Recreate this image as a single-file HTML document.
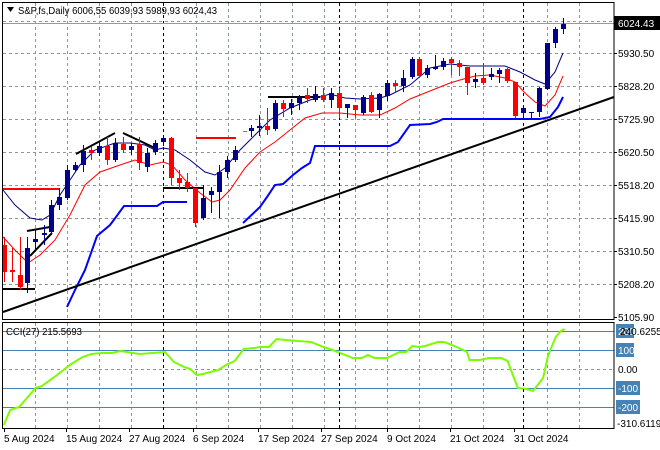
<!DOCTYPE html><html><head><meta charset="utf-8"><style>
body{margin:0;background:#fff;width:660px;height:450px;overflow:hidden}
svg{display:block;font-family:"Liberation Sans",sans-serif;font-size:10px}
</style></head><body>
<svg id="s" width="660" height="450" xmlns="http://www.w3.org/2000/svg">
<rect width="660" height="450" fill="#fff"/>
<g id="grid" stroke="#8a95a0" stroke-dasharray="3,3" stroke-width="1"></g>
<g id="cci"></g>
<g id="main"></g>
<rect x="2.5" y="2.5" width="611.5" height="317" fill="none" stroke="#000"/>
<rect x="2.5" y="322.5" width="611.5" height="106" fill="none" stroke="#000"/>
<path d="M7 7 L14 7 L10.5 12 Z" fill="#000"/>
<text x="18" y="14" font-size="10" textLength="199" lengthAdjust="spacingAndGlyphs">S&amp;P,fs,Daily  6006,55 6039,93 5989,93 6024,43</text>
<text x="6" y="335" font-size="10" textLength="76" lengthAdjust="spacingAndGlyphs">CCI(27) 215.5693</text>
<g id="labels" font-size="10"></g>
</svg>
<script>
const NS="http://www.w3.org/2000/svg";
function el(p,t,a,txt){const e=document.createElementNS(NS,t);for(const k in a)e.setAttribute(k,a[k]);if(txt!=null)e.textContent=txt;document.getElementById(p).appendChild(e);return e;}
[21,53,86,119,152,185,218,251,284].forEach(y=>el('grid','line',{x1:3,x2:614,y1:y+.5,y2:y+.5}));
[369].forEach(y=>el('grid','line',{x1:3,x2:614,y1:y+.5,y2:y+.5}));
[35,67,99,131,196,228,260,292,324,355,387,419,451,483,547,579].forEach(x=>{el('grid','line',{x1:x+.5,x2:x+.5,y1:3,y2:319});el('grid','line',{x1:x+.5,x2:x+.5,y1:323,y2:428});});
[163,339,523].forEach(x=>{el('main','line',{x1:x+.5,x2:x+.5,y1:3,y2:319,stroke:'#000','stroke-dasharray':'3,3'});el('main','line',{x1:x+.5,x2:x+.5,y1:323,y2:428,stroke:'#000','stroke-dasharray':'3,3'});});
[331,350,388,407].forEach(y=>el('cci','line',{x1:3,x2:614,y1:y+.5,y2:y+.5,stroke:'#4682b4'}));
const cp="3,425 8,410 15,407 22,397 28,388 33,386 45,375 55,365 65,357 72,354 80,353 88,353 95,351 100,352 110,354 120,353 130,352 137,362 145,367 150,369 155,375 160,374 172,370 178,365 185,361 192,349 200,348 205,347 212,347 218,339 225,340 235,341 245,342 255,347 262,350 268,353 278,358 285,358 290,355 295,358 305,358 315,352 320,352 325,346 330,347 335,346 345,342 350,342 360,347 368,352 370,360 378,360 385,358 395,358 400,361 408,388 415,389 420,391 428,378 432,355 438,337 442,331 445,329".split(' ').map(p=>{const [x,y]=p.split(',').map(Number);return (x*1.269).toFixed(1)+','+y;}).join(' ');
el('cci','polyline',{fill:'none',stroke:'#7cfc00','stroke-width':2,points:cp});
el('main','line',{x1:3,x2:614,y1:23.5,y2:23.5,stroke:'#999'});
el('main','polyline',{fill:'none',stroke:'#000080','stroke-width':1,points:"3,190 15,205 30,218 42,220 50,215 60,195 70,180 80,165 95,150 115,143 130,143 145,145 155,150 163,148 175,150 190,160 205,172 215,175 225,168 240,150 255,135 270,120 290,108 310,100 330,94 345,98 360,99 380,98 390,95 410,85 430,68 450,64 470,66 490,66 505,66 520,72 535,80 545,84 555,72 563,53"});
el('main','polyline',{fill:'none',stroke:'#f00','stroke-width':1,points:"3,237 15,250 28,263 40,255 55,240 70,215 85,185 100,172 120,165 135,160 150,165 163,162 172,165 185,180 200,193 212,202 220,200 230,190 245,168 260,152 275,142 290,130 305,118 322,113 340,113 360,115 380,115 395,108 410,99 430,91 450,83 460,80 475,76 490,75 505,78 515,82 525,93 535,102 545,106 555,95 563,76"});
el('main','polyline',{fill:'none',stroke:'#0000ff','stroke-width':2,points:"67,307 75,290 85,270 97,236 110,225 116,217 124,206 145,206 157,206 163,202 187,202"});
el('main','polyline',{fill:'none',stroke:'#0000ff','stroke-width':2,points:"243,223 260,207 267,197 275,185 283,184 293,175 302,168 310,163 315,146 330,146 390,146 398,142 410,125 430,124 437,122 443,119 540,119 550,117 558,107 563,97"});
[[3,312,614,97,2],[3,289,35,289,2],[27,231,50,227,2],[30,256,52,233,2],[76,154,115,133,2],[123,133,157,149,2],[163,188,203,188,2],[268,97,320,97,2]].forEach(l=>el('main','line',{x1:l[0],y1:l[1],x2:l[2],y2:l[3],stroke:'#000','stroke-width':l[4]}));
[[3,189,60,189],[196,138,236,138]].forEach(l=>el('main','line',{x1:l[0],y1:l[1],x2:l[2],y2:l[3],stroke:'#f00','stroke-width':2}));
el('main','line',{x1:243,y1:131.5,x2:247,y2:131.5,stroke:'#0c0'});
const C=[[4,245,272,237,282,'r'],[12,270,272,248,282,'r'],[20,275,287,237,290,'r'],[27,248,283,237,293,'b'],[35,239,242,229,250,'b'],[44,233,235,225,245,'b'],[51,205,232,200,235,'b'],[59,197,205,188,210,'b'],[67,170,198,165,200,'b'],[75,165,170,162,172,'b'],[83,151,165,145,172,'b'],[91,150,153,147,160,'r'],[99,146,153,141,156,'b'],[107,146,160,137,165,'r'],[115,143,160,138,162,'b'],[123,144,150,137,153,'r'],[131,146,150,143,155,'b'],[139,144,163,137,170,'r'],[147,153,167,148,172,'b'],[155,143,152,140,155,'b'],[163,138,142,137,146,'b'],[171,138,178,137,185,'r'],[179,178,183,170,190,'r'],[187,182,188,173,192,'r'],[195,188,223,188,227,'r'],[203,198,218,185,220,'b'],[211,191,195,187,213,'b'],[219,172,192,165,218,'b'],[227,160,172,156,178,'b'],[235,150,160,146,162,'b'],[251,128,131,125,137,'b'],[259,126,128,115,136,'b'],[267,126,130,108,135,'r'],[275,103,129,100,131,'b'],[283,103,109,100,117,'r'],[291,103,108,99,115,'b'],[299,97,103,95,110,'b'],[307,95,99,88,103,'r'],[315,94,100,86,102,'b'],[323,95,100,88,102,'r'],
[331,93,100,88,108,'b'],[339,93,108,88,118,'r'],[347,104,108,104,118,'b'],[355,105,110,105,118,'r'],[363,97,113,95,115,'b'],[371,95,112,92,113,'r'],[379,94,110,93,118,'b'],[387,83,96,80,101,'b'],[395,83,86,80,92,'r'],[403,78,86,70,92,'b'],[412,59,77,57,79,'b'],[419,59,76,57,78,'r'],[427,68,75,65,78,'b'],[435,67,69,55,70,'b'],[443,61,67,58,70,'b'],[451,59,63,57,75,'r'],[459,63,67,60,76,'r'],[467,67,83,67,95,'r'],[475,79,82,73,88,'b'],[483,78,83,63,85,'r'],[491,74,77,68,80,'b'],[499,70,74,68,83,'b'],[507,69,81,68,83,'r'],[515,82,116,82,118,'r'],[523,108,113,108,118,'b'],[531,112,113,112,118,'b'],[539,88,112,87,117,'b'],[547,43,89,43,90,'b'],[555,29,43,27,48,'b'],[563,24,29,18,34,'b']];
C.forEach(c=>{const col=c[5]=='b'?'#00008b':'#f00';el('main','line',{x1:c[0]+.5,x2:c[0]+.5,y1:c[3],y2:c[4],stroke:col});el('main','rect',{x:c[0]-2,y:c[1],width:5,height:Math.max(1,c[2]-c[1]),fill:col});});
el('labels','rect',{x:614,y:16,width:46,height:14,fill:'#000'});
el('labels','text',{x:618,y:27,fill:'#fff'},'6024.43');
[['5930.50',53],['5828.20',86],['5725.90',119],['5620.50',152],['5518.20',185],['5415.90',218],['5310.50',251],['5208.20',284],['5105.90',317]].forEach(l=>{el('labels','line',{x1:614,x2:617,y1:l[1]+.5,y2:l[1]+.5,stroke:'#000'});el('labels','text',{x:618,y:l[1]+4},l[0]);});
[['200',331],['100',350],['-100',388],['-200',407]].forEach(l=>{el('labels','rect',{x:616,y:l[1]-7,width:l[0].length>3?24:18,height:14,fill:'#4682b4'});el('labels','text',{x:618,y:l[1]+4,fill:'#fff'},l[0]);});
el('labels','text',{x:618,y:373},'0.00');
el('labels','text',{x:620,y:335},'240.6255');
el('labels','text',{x:617,y:427},'-310.6119');
[['5 Aug 2024',4],['15 Aug 2024',66],['27 Aug 2024',129],['6 Sep 2024',193],['17 Sep 2024',258],['27 Sep 2024',321],['9 Oct 2024',387],['21 Oct 2024',450],['31 Oct 2024',514]].forEach(l=>{el('labels','text',{x:l[1],y:442},l[0]);el('labels','line',{x1:l[1]+.5,x2:l[1]+.5,y1:429,y2:432,stroke:'#000'});});
</script>
</body></html>
